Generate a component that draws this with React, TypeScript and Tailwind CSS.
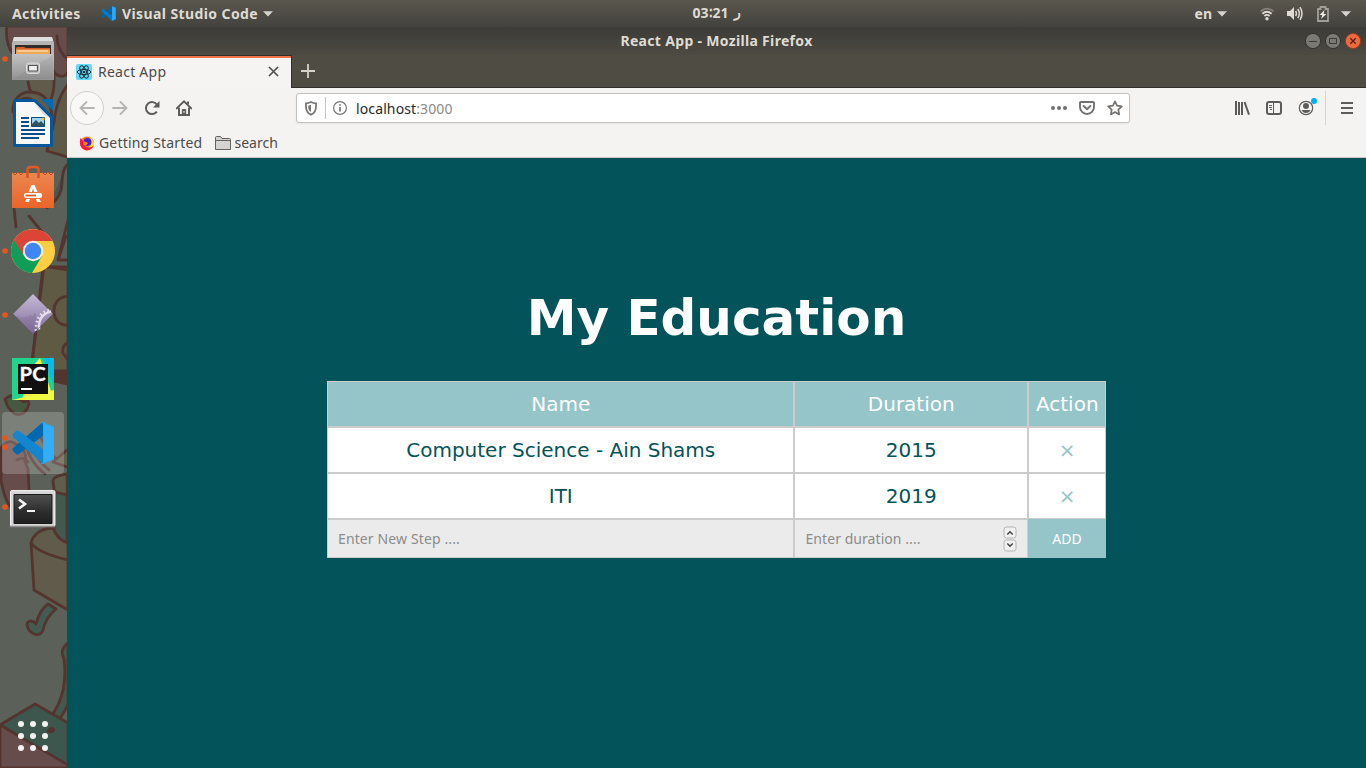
import React from "react";

const Caret = () => (
  <svg width="10" height="6" viewBox="0 0 10 6" fill="#d6d4d0"><path d="M0 .3h10L5 5.6z" /></svg>
);

const Code = ({ size }: { size: number }) => (
  <svg width={size} height={size} viewBox="0 0 42 42">
    <path d="M31 0 1 27v3l3 3q2 1 3 0L32 14z" fill="#0065a9" />
    <path d="M31 42 1 15v-3l3-3q2-1 3 0l25 19z" fill="#007acc" />
    <path d="M31 0 41 5v32l-10 5q-2 0-3-1 3 1 3-2V3q0-3-3-2 1-1 3-1z" fill="#1f9cf0" />
    <path d="M31 3 41 5v32l-10 2z" fill="#2aa7f8" />
  </svg>
);

function TopBar() {
  return (
    <header className="flex h-[27px] shrink-0 items-center bg-linear-to-b from-[#5a574e] to-[#43423d] font-['Noto_Sans',sans-serif] text-[14px] font-bold text-[#dfdbd2]">
      <div className="w-[101px] pl-3 tracking-[0.36px]">Activities</div>
      <div className="flex flex-1 items-center">
        <Code size={15} />
        <span className="ml-[6px] w-[136px] tracking-[0.4px] whitespace-nowrap">Visual Studio Code</span>
        <span className="ml-[5px]"><Caret /></span>
      </div>
      <div className="flex w-[49px] justify-between whitespace-nowrap" dir="ltr">
        <span className="relative -top-px -left-[9px]">03∶21</span><span className="relative -top-[2px] -left-[10px]">ر</span>
      </div>
      <div className="flex flex-1 items-center justify-end pr-[15px]">
        <span>en</span>
        <span className="mr-[33px] ml-[5px]"><Caret /></span>
        <svg width="14" height="14" viewBox="0 0 14 14" fill="none" stroke="#dfdbd2" strokeWidth="1.8">
          <path d="M.6 4.4Q7-1.2 13.4 4.4" stroke="#85827b" />
          <path d="M2.4 6.8q4.6-4 9.2 0M4.4 9q2.6-2.2 5.2 0" />
          <circle cx="7" cy="11.7" r="1.7" fill="#dfdbd2" stroke="none" />
        </svg>
        <svg className="ml-[13px]" width="16" height="15" viewBox="0 0 16 15" fill="none" stroke="#dfdbd2" strokeWidth="1.5">
          <path d="M0 5h3l4-4v13l-4-4H0z" fill="#dfdbd2" stroke="none" />
          <path d="M8.6 5q1.6 2.5 0 5M10.8 3q3 4.5 0 9M13 1.2q4 6.3 0 12.6" />
        </svg>
        <svg className="ml-[14px]" width="12" height="16" viewBox="0 0 12 16">
          <path d="M1 3h2.5V1h5v2H11v12H1z" fill="none" stroke="#a29f98" strokeWidth="1.8" />
          <path d="M7.5 4 2.6 9h2.7L4 13l5.4-5H6.6z" fill="#f0eeea" />
        </svg>
        <span className="ml-[12px]"><Caret /></span>
      </div>
    </header>
  );
}

function Wallpaper() {
  return (
    <svg className="absolute inset-0" width="67" height="741" viewBox="0 27 67 741">
      <rect y="27" width="67" height="741" fill="#5b6158" />
      <g stroke="#54342f" strokeWidth="2.8" fill="none" strokeLinejoin="round" strokeLinecap="round">
        <path d="M7 26C5 40 9 52 18 58l34 2c0 8 1 15 8 16 4 1 7-1 8-5V26z" fill="#664d4b" />
        <path d="M57 36q0 14 11 24" />
        <path d="M28 82q4 22 18 24 9-8 8-30" fill="#605b4a" />
        <path d="M13 112c-1-12 7-20 17-20 14 0 21 10 22 24" fill="#605b4a" />
        <path d="M20 100q12-6 19 8" />
        <path d="M68 84Q56 100 54 122l-7 29 21 6" fill="#5f5947" />
        <path d="M68 164c-7 6-5 16-7 26q-2 9-14 18" fill="#465850" />
        <path d="M14 208l2 19M29 216l13 16M68 220 58 260h10M66 236l-8 24" />
        <path d="M43 267h25v104H31z" fill="#5e5a43" />
        <path d="M44 266l-13 105M50 267l18 3" />
        <path d="M68 296c-10 1-15 8-14 17 1 8 7 13 14 12M68 343q-6 2-5 10l5 7" />
        <path d="M30 372h38v12l-15-3-22-6z" fill="#54342f" />
        <path d="M5 399q9-7 14 0l5 3q5-3 5 2-4 13-14 10-7-4-10-15z" fill="#46583f" />
        <path d="M1 448c6-9 12-7 16-3 7 3 10 10 8 17l3 7 1 20c-3 12-7 20-13 22C7 507 3 492 1 480z" fill="#664d4b" />
        <path d="M17 460q6-4 11 2M25 438q2 22 20 36M31 436q1 20 18 34M38 430q6 18 19 30" />
        <path d="M67 450 53 462l14 5M67 474c-7 1-15 3-14 8l2 13-1 41 14 12z" fill="#5e5f4b" />
        <path d="M55 492q-1 25-1 40l13 16V495z" fill="#43594f" />
        <path d="M31 543c2-9 11-15 22-15 3 8 8 13 15 15v67q-14-8-34-20z" fill="#605b4a" />
        <path d="M31 543q7 10 37 17" />
        <path d="M48 604c-7 5-10 12-12 20-4-5-9-3-9 1 2 10 14 13 16 5 2-10 7-16 13-21z" fill="#435b52" />
        <path d="M68 643c-7 5-7 10-4 16 4 34-8 56-25 69l15-2q10-12 14-22z" fill="#43594f" />
        <path d="M0 725 35 704l33 19v43z" fill="#3d574e" />
        <path d="M0 725v43h68v-3z" fill="#664d4b" />
        <path d="M48 731q4-5 6-1-2 3-6 1z" fill="#54342f" />
      </g>
    </svg>
  );
}

const Item = ({ dots = [], active = false, children }: { dots?: number[]; active?: boolean; children: React.ReactNode }) => (
  <svg className="block" width="67" height="64" viewBox="0 0 67 64">
    {active && <rect x="2" y="1" width="62" height="62" rx="4" fill="#fff" fillOpacity=".2" />}
    {dots.map((y) => <circle key={y} cx="5" cy={y} r="2.8" fill="#e95420" />)}
    {children}
  </svg>
);

function Dock() {
  return (
    <aside className="relative h-[741px] w-[67px] shrink-0 overflow-hidden">
      <Wallpaper />
      <nav className="relative flex h-full flex-col">
        <Item dots={[32]}>
          <defs>
            <linearGradient id="steel" x1="0" y1="0" x2="0" y2="1"><stop stopColor="#c2c2c2" /><stop offset="1" stopColor="#929292" /></linearGradient>
            <linearGradient id="bag" x1="0" y1="0" x2="0" y2="1"><stop stopColor="#ea8750" /><stop offset="1" stopColor="#ec6429" /></linearGradient>
            <linearGradient id="violet" x1="0" y1="0" x2="0" y2="1"><stop stopColor="#c5bbd5" /><stop offset="1" stopColor="#816b9c" /></linearGradient>
            <linearGradient id="screen" x1="0" y1="0" x2="0" y2="1"><stop stopColor="#505050" /><stop offset=".6" stopColor="#2c2c2c" /><stop offset="1" stopColor="#202020" /></linearGradient>
          </defs>
          <path d="M14 10h38l2 6v36H12V16z" fill="#b5b5b5" />
          <path d="M14 10h38l1 4H13z" fill="#dedede" />
          <path d="M15 18h36v9H15z" fill="#302b28" />
          <path d="M17 20h7l2 1h24v6H16v-6z" fill="#d76028" />
          <path d="M16 22.5h34V27H16z" fill="#efa850" />
          <path d="M18 24h30" stroke="#fff0d8" />
          <path d="M12 28q0-1 2-1h38q2 0 2 1v25H12z" fill="url(#steel)" />
          <path d="M13 52 53 28v24z" fill="#707070" fillOpacity=".13" />
          <rect x="26.5" y="36" width="13" height="10.5" rx="2" fill="#bcbcbc" stroke="#ddd" />
          <rect x="28.5" y="38.5" width="9" height="5.5" rx=".5" fill="#eee" stroke="#555" strokeWidth="1.2" />
        </Item>
        <Item>
          <path d="M15 8h20l18 17v29q0 2-2 2H15q-2 0-2-2V10q0-2 2-2z" fill="#03579a" />
          <path d="M41 8h12v12z" fill="#0769ae" />
          <path d="M16 11h18l16 16v26H16z" fill="#f7f7f7" />
          <path d="m34 11 16 16-7-4z" fill="#d5dade" />
          <path d="M21 27h8M21 31h8M21 35h8M21 39h24M21 43h24M21 47h18" stroke="#074f88" strokeWidth="2" />
          <path d="M31.5 26.500h13v9h-13z" fill="#9bd6f5" stroke="#064d80" strokeWidth="1" />
          <circle cx="43" cy="28" r="1.6" fill="#f0c72c" />
          <path d="M32 35v-2l4-4 3 3 2-2 3 3v2z" fill="#315360" />
        </Item>
        <Item>
          <path d="M27.500 23v-8q0-3 3-3h5q3 0 3 3v8" fill="none" stroke="#e05a26" strokeWidth="2.5" />
          <path d="M12 18h42v35H12z" fill="url(#bag)" />
          <path d="M12 17l3 3 3-3 3 3 3-3M42 17l3 3 3-3 3 3 3-3" fill="none" stroke="#c94c20" />
          <path d="M27.500 14v9M38.500 14v9" stroke="#d8511f" strokeWidth="2.400" />
          <path d="M31.500 30h3l3 7h-3.200L33 34l-1.300 3h-3.200zM26.500 44h3.500l-1 3h-4zM36 44h3.500l1.500 3h-4z" fill="#fff" />
          <rect x="24" y="38" width="18" height="5" rx="2" fill="#fff" />
          <path d="M25.500 40.500H36" stroke="#e95420" strokeWidth="1.8" />
        </Item>
        <Item dots={[32]}>
          <circle cx="33" cy="32" r="22" fill="#ffcd40" />
          <path d="M33 32 14 21A22 22 0 0 0 32 54l10-17z" fill="#0f9d58" />
          <path d="M14 21A22 22 0 0 1 52.5 22H33l-9 15z" fill="#db4437" />
          <circle cx="33" cy="32" r="10.2" fill="#f3f3f3" />
          <circle cx="33" cy="32" r="8.2" fill="#4285f4" />
        </Item>
        <Item dots={[32]}>
          <path d="m33 11 20 20-20 20-20-20z" fill="url(#violet)" />
          <path d="M15 33h4l1 2 2-1 2 1 2-2 2 1 2-2 3 1 1-3 2 1v6l-1 13h-3z" fill="#716084" fillOpacity=".3" />
          <path d="M51 28.500q-13 3-12 18" fill="none" stroke="#e4dce8" strokeWidth="2.400" />
          <path d="M49 27q-14 4-13 22" fill="none" stroke="#e4dce8" strokeWidth="2.800" strokeDasharray="1.600 2.600" />
          <path d="m13 31 20 20 20-20" fill="none" stroke="#5d4f70" strokeOpacity=".55" />
        </Item>
        <Item>
          <path d="M12 11h42v42H12z" fill="#20d48d" />
          <path d="m40 11-9 10-9 32h32z" fill="#f7f04c" />
          <path d="M43 11h11v28z" fill="#07bde8" />
          <path d="m12 53 42-10v10z" fill="#effb42" />
          <path d="M18 17h30v30H18z" fill="#111" />
          <text x="19.600" y="34" fontFamily="Lato, sans-serif" fontSize="18.500" fontWeight="700" fill="#fff" stroke="#fff" strokeWidth=".3" textLength="26" lengthAdjust="spacingAndGlyphs">PC</text>
          <path d="M21 42h11" stroke="#fff" strokeWidth="2" />
        </Item>
        <Item active dots={[27, 36]}>
          <g transform="translate(12 11)">
            <path d="M31 0 1 26q-1 1 0 3l3 3q1 1 3 0L32 13z" fill="#0069af" />
            <path d="M31 42 1 15q-1-2 0-3l3-3q1-1 3 0l25 19z" fill="#1485cf" />
            <path d="M31 0 42 5v32l-11 5q-2 0-3-1 3 1 3-2V3q0-3-3-2 1-1 3-1z" fill="#2ba7f5" />
            <path d="M32 2 42 5v32l-10 3z" fill="#31adf9" />
          </g>
        </Item>
        <Item dots={[32]}>
          <rect x="10.5" y="15.5" width="44.500" height="36" rx="1.5" fill="#d7d7d7" stroke="#f0f0f0" />
          <path d="M10 51.500h45" stroke="#8d8d8d" strokeWidth="1.500" />
          <path d="M14 19.500h38v29H14z" fill="url(#screen)" stroke="#181818" strokeWidth="1" />
          <path d="m19 24.500 6 4.500-6 4.500" fill="none" stroke="#f5f5f5" strokeWidth="2.6" />
          <path d="M27 36h8" stroke="#f5f5f5" strokeWidth="2" />
        </Item>
        <div className="mt-auto mb-[17px] ml-[18px] grid w-[30px] grid-cols-[6px_6px_6px] gap-[6px]">
          {Array.from({ length: 9 }, (_, i) => <i key={i} className="size-[6px] rounded-full bg-[#f4f2f0]" />)}
        </div>
      </nav>
    </aside>
  );
}

function Tabs() {
  return (
    <>
      <div className="flex h-[28px] items-center bg-linear-to-b from-[#3c3b37] to-[#4d4a42]">
        <div className="w-[106px]" />
        <h2 className="flex-1 pb-[2px] text-center font-['Noto_Sans',sans-serif] text-[14px] font-bold tracking-[0.32px] whitespace-nowrap text-[#dfdbd2]">React App - Mozilla Firefox</h2>
        <div className="flex w-[106px] justify-end gap-[4px] pr-[5px]">
          <svg width="16" height="16" viewBox="0 0 16 16"><circle cx="8" cy="8" r="7.6" fill="#7b7973" stroke="#35332e" /><path d="M4 8.500h8" stroke="#3c3b37" /></svg>
          <svg width="16" height="16" viewBox="0 0 16 16"><circle cx="8" cy="8" r="7.6" fill="#7b7973" stroke="#35332e" /><path d="M4.500 5.500h7v5h-7z" fill="none" stroke="#3c3b37" /></svg>
          <svg width="16" height="16" viewBox="0 0 16 16"><circle cx="8" cy="8" r="7.6" fill="#f0693b" stroke="#8d3f22" /><path d="m5.300 5.300 5.400 5.400M10.700 5.300l-5.400 5.400" stroke="#4b2115" strokeWidth="1.3" /></svg>
        </div>
      </div>
      <div className="flex h-[33px] items-stretch bg-[#4f4c44]">
        <div className="flex w-[225px] items-center border-t border-r border-[#302f2b] bg-[#f5f4f2]">
          <div className="flex h-full w-full items-center border-t-2 border-[#f37348] pb-[3px] pl-[9px]">
            <svg width="16" height="16" viewBox="0 0 16 16" fill="none" stroke="#20323b">
              <rect width="16" height="16" rx="2" fill="#61dafb" stroke="none" />
              <ellipse cx="8" cy="8" rx="6.8" ry="2.6" />
              <ellipse cx="8" cy="8" rx="6.8" ry="2.6" transform="rotate(60 8 8)" />
              <ellipse cx="8" cy="8" rx="6.8" ry="2.6" transform="rotate(120 8 8)" />
              <circle cx="8" cy="8" r="1.3" fill="#20323b" stroke="none" />
            </svg>
            <span className="ml-[6px] flex-1 text-[14px] tracking-[0.25px]">React App</span>
            <svg className="mr-[12px]" width="11" height="11" viewBox="0 0 11 11" stroke="#53524f" strokeWidth="1.7"><path d="m1 1 9 9M10 1 1 10" /></svg>
          </div>
        </div>
        <div className="flex flex-1 items-center border-b border-[#302f2b] pl-[9px]">
          <svg width="14" height="14" viewBox="0 0 14 14" stroke="#d6d3cd" strokeWidth="1.8"><path d="M7 0v14M0 7h14" /></svg>
        </div>
      </div>
    </>
  );
}

function Toolbar() {
  return (
    <div className="h-[70px] border-b border-[#c9c7c5] bg-[#f4f3f2] text-[#4c4b49]">
      <div className="flex h-10 items-center">
        <div className="flex w-[229px] items-center pl-[3px]">
          <span className="flex size-[34px] items-center justify-center rounded-full border border-[#d0cfcd] bg-[#f9f8f7]">
            <svg width="16" height="14" viewBox="0 0 16 14" fill="none" stroke="#b5b4b2" strokeWidth="1.8" strokeLinecap="round"><path d="M15 7H1.500M7.500 1l-6 6 6 6" /></svg>
          </span>
          <svg className="ml-2" width="16" height="14" viewBox="0 0 16 14" fill="none" stroke="#b5b4b2" strokeWidth="1.8" strokeLinecap="round"><path d="M1 7h13.500M8.500 1l6 6-6 6" /></svg>
          <svg className="ml-4" width="16" height="16" viewBox="0 0 16 16" fill="none" stroke="#5d5c5a" strokeWidth="2"><path d="M12.800 11.600A6 6 0 1 1 13 4.800" /><path d="M15.500 1v6.500H9z" fill="#5d5c5a" stroke="none" /></svg>
          <svg className="ml-4" width="16" height="16" viewBox="0 0 16 16" fill="none" stroke="#5d5c5a" strokeWidth="2"><path d="m.7 8.400 7.300-7 7.300 7" strokeLinecap="round" /><path d="M3 7.500V15h10V7.500" /><path d="M6.300 15V9.500h3.400V15" fill="#5d5c5a" strokeWidth="1" /><path d="M12 1.500v3" /><path d="M8 11v1.600" stroke="#fff" strokeWidth="1" /></svg>
        </div>
        <div className="flex h-[30px] w-[834px] items-center rounded-[3px] border border-[#c4c2bf] bg-white shadow-sm shadow-black/5">
          <svg className="ml-[7px]" width="14" height="15" viewBox="0 0 14 15"><path d="M2 2.400Q4.500 2.300 7 1q2.500 1.300 5 1.400Q12.800 11.500 7 13.700 1.200 11.500 2 2.400z" fill="none" stroke="#777674" strokeWidth="1.800" /><path d="M7 3.800v7.200Q4 9.500 4.200 4.800 6 4.500 7 3.800z" fill="#777674" /></svg>
          <i className="mr-[7px] ml-[7px] h-[22px] w-px bg-[#c8c7c5]" />
          <svg width="14" height="14" viewBox="0 0 14 14" fill="none" stroke="#777674"><circle cx="7" cy="7" r="6.400" strokeWidth="1.200" /><path d="M7 6v4.500M7 3.200v1.600" strokeWidth="1.700" /></svg>
          <span className="ml-[9px] flex-1 text-[14px] tracking-[0.12px] text-[#2b2a28]">localhost<span className="text-[#8b8a88]">:3000</span></span>
          <svg width="18" height="6" viewBox="0 0 18 6" fill="#737270"><circle cx="3" cy="3" r="2" /><circle cx="9" cy="3" r="2" /><circle cx="15" cy="3" r="2" /></svg>
          <svg className="ml-[11px]" width="16" height="14" viewBox="0 0 16 14" fill="none" stroke="#737270" strokeWidth="1.900"><path d="M2 1h12q1 0 1 1v4a7 7 0 0 1-14 0V2q0-1 1-1z" /><path d="m4.600 5 3.400 3.300L11.400 5" strokeLinecap="round" /></svg>
          <svg className="mr-[6px] ml-[12px]" width="16" height="16" viewBox="0 0 16 16"><path d="m8 1.400 2 4.300 4.800.600-3.500 3.300.900 4.800L8 12l-4.200 2.400.900-4.800-3.500-3.300L6 5.700z" fill="none" stroke="#737270" strokeWidth="1.700" strokeLinejoin="round" /></svg>
        </div>
        <div className="flex flex-1 items-center justify-end text-[#5d5c5a]">
          <svg width="16" height="16" viewBox="0 0 16 16" stroke="currentColor" strokeWidth="2"><path d="M2 1v14M5 2v13M8 2v13" /><path d="M10.500 2 15 14.700" /></svg>
          <svg className="ml-4" width="16" height="14" viewBox="0 0 16 14" fill="none" stroke="currentColor"><rect x="1" y="1" width="14" height="12" rx="2" strokeWidth="2" /><path d="M7.500 1v12M3 4.500h3M3 6.500h3M4 8.500h2" /></svg>
          <div className="relative ml-4 size-4">
            <svg width="16" height="16" viewBox="0 0 16 16"><circle cx="8" cy="8" r="6.700" fill="none" stroke="#5d5c5a" strokeWidth="1.200" /><circle cx="8" cy="6" r="3" fill="#5d5c5a" /><path d="M3.500 10h9Q11 13 8 13t-4.500-3z" fill="#5d5c5a" /></svg>
            <i className="absolute -top-[2px] -right-[3px] size-[6px] rounded-full bg-[#00b0ff]" />
          </div>
          <i className="ml-[11px] h-[34px] w-px bg-[#d6d5d3]" />
          <svg className="mr-[13px] ml-[15px]" width="12" height="12" viewBox="0 0 12 12" stroke="currentColor" strokeWidth="2"><path d="M0 1h12M0 6h12M0 11h12" /></svg>
        </div>
      </div>
      <div className="flex h-[29px] items-center pl-3 text-[14px]">
        <svg width="16" height="16" viewBox="0 0 16 16">
          <circle cx="8" cy="8.500" r="7" fill="#ff7a2a" />
          <path d="M10 1q6 4 5 9-2 4-5 4z" fill="#ffd92e" />
          <path d="M1.500 3Q-1 12 6 15q6 1 8.500-4-3 2-5 1.500Q4.500 12 4.500 7L2.500 4z" fill="#f8183f" />
          <circle cx="8.500" cy="7" r="4" fill="#4a1fd0" /><path d="M4 6.500h2l3 1.500-2 2.500-2.500-.500z" fill="#ff8a16" />
        </svg>
        <span className="ml-1 w-[104px] tracking-[0.18px] whitespace-nowrap">Getting Started</span>
        <svg className="ml-[12px]" width="16" height="14" viewBox="0 0 16 14" fill="#d5d3d1" stroke="#64625f"><path d="M.500 13.500V1.500q0-1 1-1h4l1.500 2h7.500q1 0 1 1v10zM.500 4.500h15" /></svg>
        <span className="ml-[3.500px]">search</span>
      </div>
    </div>
  );
}

const entries = [
  { name: "Computer Science - Ain Shams", year: "2015" },
  { name: "ITI", year: "2019" },
];

function Education() {
  return (
    <main className="flex flex-1 flex-col items-center bg-[#03535a] pt-[123px] font-['DejaVu_Sans',sans-serif] text-[20px]">
      <h1 className="h-[100px] text-[50px] leading-[75px] font-bold text-white">My Education</h1>
      <div className="grid w-[779px] grid-cols-[467px_234px_78px] grid-rows-[46px_46px_46px_39px] text-center leading-[44px] text-[#03535a] [&>*]:border [&>*]:border-[#ccc]">
        {["Name", "Duration", "Action"].map((h) => <div key={h} className="bg-[#95c5c9] pl-[0.5px] text-white">{h}</div>)}
        {entries.map((e) => (
          <React.Fragment key={e.name}>
            <div className="bg-white pl-[0.5px]">{e.name}</div>
            <div className="bg-white pl-[0.5px]">{e.year}</div>
            <div className="bg-white pl-[0.5px] text-[#95c5c9]">×</div>
          </React.Fragment>
        ))}
        <div className="flex items-center bg-[#ebebeb] pl-[10px] font-['Noto_Sans',sans-serif] text-[14px] tracking-[0.12px] text-[#8c8c8c]">Enter New Step ....</div>
        <div className="flex items-center justify-between bg-[#ebebeb] pr-[10px] pl-[10.500px] font-['Noto_Sans',sans-serif] text-[14px] tracking-[0.06px] text-[#8c8c8c]">
          <span>Enter duration ....</span>
          <svg width="14" height="26" viewBox="0 0 14 26" fill="#f0f0f0" stroke="#b4b4b4">
            <rect x="1" y="1" width="12" height="11" rx="2.500" /><rect x="1" y="14" width="12" height="11" rx="2.500" />
            <path d="m4.300 8.500 2.700-2.700 2.700 2.700M4.300 17.500 7 20.200l2.700-2.700" fill="none" stroke="#444" strokeWidth="1.500" />
          </svg>
        </div>
        <button className="flex items-center justify-center !border-0 bg-[#95c5c9] font-['Noto_Sans',sans-serif] text-[14px] leading-[39px] text-white">ADD</button>
      </div>
    </main>
  );
}

export default function App() {
  return (
    <div className="flex h-[768px] w-[1366px] flex-col overflow-hidden">
      <TopBar />
      <div className="flex flex-1">
        <Dock />
        <div className="flex flex-1 flex-col font-['Noto_Sans',sans-serif] text-[#4c4b49]">
          <Tabs />
          <Toolbar />
          <Education />
        </div>
      </div>
    </div>
  );
}
